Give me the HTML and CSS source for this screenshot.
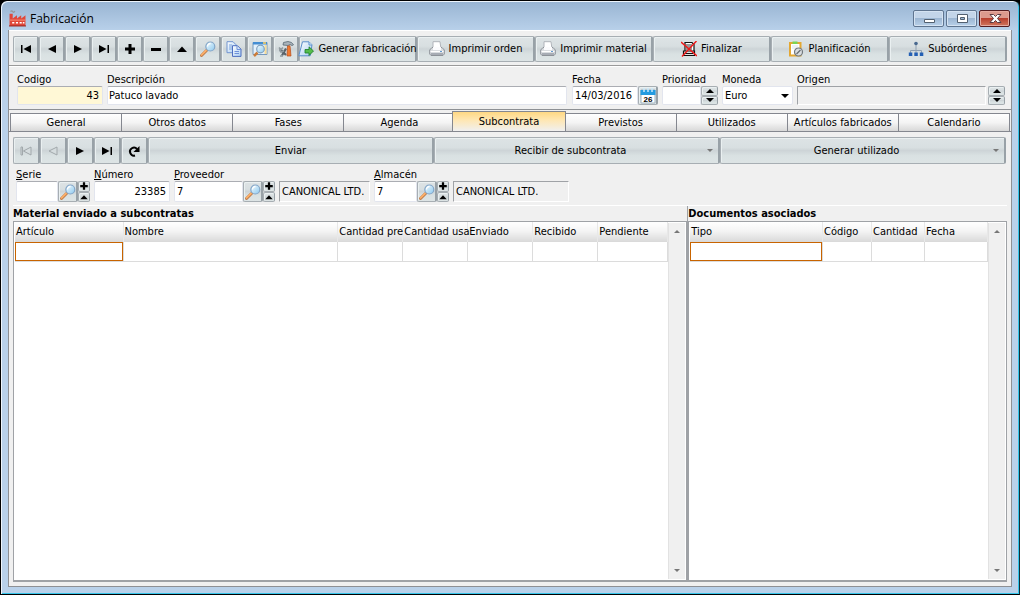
FILE: index.html
```html
<!DOCTYPE html>
<html lang="es">
<head>
<meta charset="utf-8">
<title>Fabricación</title>
<meta name="viewport" content="width=device-width, initial-scale=1">
<link rel="stylesheet" href="styles.css">
</head>
<body>
<svg class="sprite" aria-hidden="true">
  <defs>
    <linearGradient id="glass" x1="0" y1="0" x2="1" y2="1"><stop offset="0" stop-color="#f4fcff"/><stop offset="1" stop-color="#8cc8ee"/></linearGradient>
    <linearGradient id="sheet" x1="0" y1="0" x2="1" y2="1"><stop offset="0" stop-color="#ffffff"/><stop offset="1" stop-color="#a8cdf2"/></linearGradient>
  </defs>
  <symbol id="first" viewBox="0 0 16 16"><path d="M3 4h1.500v8H3zM13 4v8L5.500 8z"/></symbol>
  <symbol id="prev" viewBox="0 0 16 16"><path d="M12 4v8L4 8z"/></symbol>
  <symbol id="next" viewBox="0 0 16 16"><path d="M4 4v8l8-4z"/></symbol>
  <symbol id="last" viewBox="0 0 16 16"><path d="M3 4v8l7.500-4zM11.500 4H13v8h-1.500z"/></symbol>
  <symbol id="plus" viewBox="0 0 16 16"><path d="M6.500 3h3v3.500H13v3H9.500V13h-3V9.500H3v-3h3.500z"/></symbol>
  <symbol id="minus" viewBox="0 0 16 16"><path d="M3 7h10v3H3z"/></symbol>
  <symbol id="up" viewBox="0 0 16 16"><path d="M3 11h10L8 5.500z"/></symbol>
  <symbol id="reload" viewBox="0 0 16 16"><path d="M9 12.500A4 4 0 1 1 11 6" fill="none" stroke="#000" stroke-width="2"/><path d="M13.500 3v6H7.500z"/></symbol>
  <symbol id="lens" viewBox="0 0 16 16"><path d="M1.500 14.500l5-5" stroke="#c08050" stroke-width="3" stroke-linecap="round"/><path d="M1.500 14l4.600-4.600" stroke="#ffb068" stroke-width="1.600" stroke-linecap="round"/><circle cx="10.300" cy="5.500" r="4.500" fill="url(#glass)" stroke="#84a6c8" stroke-width="1.200"/><path d="M7.500 5.500a3 3 0 0 1 3-3" fill="none" stroke="#fff" stroke-width="1.300"/></symbol>
  <symbol id="copy" viewBox="0 0 16 16"><path d="M1 .7h6l3 3v8H1z" fill="url(#sheet)" stroke="#7194d0"/><path d="M3 4h3M3 6h3M3 8h3" stroke="#7ba2dd"/><path d="M6.500 4.700h5l3.500 3.500v7.200H6.500z" fill="url(#sheet)" stroke="#4e6fc0"/><path d="M11 5v3.500h4M8.500 10.500h4.500M8.500 12.500h4.500" fill="none" stroke="#6f91da"/></symbol>
  <symbol id="browse" viewBox="0 0 16 16"><path d="M1 1.500h14v12H1z" fill="#e3f1fc" stroke="#7799bb"/><path d="M1 1h14v2.500H1z" fill="#438dd3"/><path d="M11 2h3" stroke="#ffd05a" stroke-width="1.500"/><path d="M12.500 4h2v9h-2z" fill="#f9dc95"/><path d="M2 15l3.500-3.500" stroke="#cc7c39" stroke-width="2.500"/><circle cx="8.500" cy="8" r="3.800" fill="url(#glass)" stroke="#7f9fbd" stroke-width="1.200"/></symbol>
  <symbol id="tools" viewBox="0 0 16 16"><path d="M4 14.500l4-7M2 8l6 6" stroke="#59636a" stroke-width="2.200"/><path d="M1 6.500l2 2 2-2M1.500 9l1.500 2 3-1M2 15h3" fill="none" stroke="#8f999e" stroke-width="1.600"/><path d="M5.500 1.500l4.500-1 3.500 1 2 2.300-1.500.7-2-1-2 1-5-.5z" fill="#a9b3ba" stroke="#586872" stroke-width=".8"/><path d="M9.500 5l2.500-.2 1 10.200h-4z" fill="#f07a30" stroke="#b54a1a" stroke-width=".7"/></symbol>
  <symbol id="export" viewBox="0 0 16 16"><path d="M4.500.8H11l3 3-1.800 11H.8z" fill="url(#sheet)" stroke="#5b8eca"/><path d="M11 1v3h3" fill="#dcefff" stroke="#5b8eca"/><path d="M7 8.500h4V5.800l4.500 4.200-4.500 4.500V12H7z" fill="#55bd4b" stroke="#187c27" stroke-width=".8"/></symbol>
  <symbol id="printer" viewBox="0 0 16 16"><path d="M4 .7h7l1 7.300H4z" fill="#fff" stroke="#b0b4ba"/><path d="M.7 9l2.300-2.500h10L15.300 9v4L14 14.500H2L.7 13z" fill="#dadde0" stroke="#8d9298"/><path d="M4 6h8v3H4z" fill="#fbfbfd"/><path d="M1.500 10.500h13" stroke="#fff"/><path d="M2 12h12v2H2z" fill="#a7acb4"/><path d="M11 10.500h2" stroke="#6499cc"/></symbol>
  <symbol id="finish" viewBox="0 0 16 16"><path d="M4 1.500h7l2 2V11H4z" fill="#fff" stroke="#111" stroke-width="1.200"/><path d="M5 4h6M5 6h6M5 8h6" stroke="#333"/><path d="M2.500 10h11v4.500h-11z" fill="#e1e1e1" stroke="#111" stroke-width="1.200"/><path d="M4 12.500h8" stroke="#111"/><path d="M0 1l16 14M15.500 0L1 15.500" stroke="#f11616" stroke-width="1.400"/></symbol>
  <symbol id="plan" viewBox="0 0 16 16"><path d="M2 2h10.500v12.500H2z" fill="#fff" stroke="#e4a832" stroke-width="2"/><path d="M4.500.5h5V3h-5z" fill="#7bd554"/><path d="M4 5h6M4 7h5" stroke="#dce6ee"/><circle cx="10.500" cy="11" r="4" fill="#d9dde0" stroke="#70777c" stroke-width="1.200"/><path d="M8.500 13l4-4" stroke="#656c71" stroke-width="1.200"/></symbol>
  <symbol id="tree" viewBox="0 0 16 16"><path d="M8 3v9M2.500 12V9.500h11V12" fill="none" stroke="#8fa0b2"/><circle cx="8" cy="2.500" r="1.800" fill="#49688f"/><path d="M.8 11.500h3.500V15H.8zM6.300 11.500h3.500V15H6.300zM11.800 11.500h3.500V15h-3.500z" fill="#2460b4"/></symbol>
</svg>

<div class="window">
  <header class="titlebar">
    <svg class="app-icon" viewBox="0 0 16 16" aria-hidden="true"><path d="M1.500 1.500q1-1.500 2 0t2-.5" fill="none" stroke="#999" stroke-width="1.200"/><path d="M.5 15V3.500h3V8l4-3v3l4-3v3l4-3v10z" fill="#e0483a"/><path d="M1 9.500h14.500" stroke="#f88a76"/><path d="M3 12h2M6.500 12h2M10 12h2M13 12h1.500" stroke="#fff" stroke-width="1.500"/><path d="M0 15h16" stroke="#9c2722"/></svg>
    <h1 class="title">Fabricación</h1>
    <div class="controls">
      <button class="control" aria-label="Minimizar"><svg viewBox="0 0 16 12"><path d="M3.500 6.500h10v3h-10z" fill="#fff" stroke="#526070"/></svg></button>
      <button class="control" aria-label="Maximizar"><svg viewBox="0 0 16 12"><path d="M3.500 1.500h10v8h-10zM6.500 4.500v2h4v-2z" fill="#fff" fill-rule="evenodd" stroke="#526070"/></svg></button>
      <button class="control close" aria-label="Cerrar"><svg viewBox="0 0 16 12"><path d="M3 1.500h3.500l2 2 2-2H14L10.500 5.500 14 9.500h-3.500l-2-2-2 2H3l3.500-4z" fill="#fff" stroke="#593c44"/></svg></button>
    </div>
  </header>

  <main class="client">
    <nav class="toolbar" aria-label="Registro">
      <button class="btn" aria-label="Primero"><svg class="glyph"><use href="#first"/></svg></button>
      <button class="btn" aria-label="Anterior"><svg class="glyph"><use href="#prev"/></svg></button>
      <button class="btn" aria-label="Siguiente"><svg class="glyph"><use href="#next"/></svg></button>
      <button class="btn" aria-label="Último"><svg class="glyph"><use href="#last"/></svg></button>
      <button class="btn" aria-label="Añadir"><svg class="glyph"><use href="#plus"/></svg></button>
      <button class="btn" aria-label="Eliminar"><svg class="glyph"><use href="#minus"/></svg></button>
      <button class="btn" aria-label="Editar"><svg class="glyph"><use href="#up"/></svg></button>
      <button class="btn" aria-label="Buscar"><svg class="icon"><use href="#lens"/></svg></button>
      <button class="btn" aria-label="Copiar"><svg class="icon"><use href="#copy"/></svg></button>
      <button class="btn" aria-label="Vista"><svg class="icon"><use href="#browse"/></svg></button>
      <button class="btn" aria-label="Herramientas"><svg class="icon"><use href="#tools"/></svg></button>
      <button class="btn"><svg class="icon"><use href="#export"/></svg>Generar fabricación</button>
      <button class="btn"><svg class="icon"><use href="#printer"/></svg>Imprimir orden</button>
      <button class="btn"><svg class="icon"><use href="#printer"/></svg>Imprimir material</button>
      <button class="btn"><svg class="icon"><use href="#finish"/></svg>Finalizar</button>
      <button class="btn"><svg class="icon"><use href="#plan"/></svg>Planificación</button>
      <button class="btn"><svg class="icon"><use href="#tree"/></svg>Subórdenes</button>
    </nav>

    <section class="record">
      <div class="field code"><label for="codigo">Codigo</label><input class="box number key-value" id="codigo" value="43"></div>
      <div class="field grow"><label for="descripcion">Descripción</label><input class="box" id="descripcion" value="Patuco lavado"></div>
      <div class="field date"><label for="fecha">Fecha</label>
        <div class="combo"><input class="box" id="fecha" value="14/03/2016"><button class="btn pick" aria-label="Calendario"><svg class="icon" viewBox="0 0 16 16"><path d="M1 2h14v13H1z" fill="#fff" stroke="#9fb2c0"/><path d="M.5 2h15v5H.500z" fill="#249be0"/><path d="M4 0v4M8 0v4M12 0v4" stroke="#c7e9fb" stroke-width="1.500"/><text class="day" x="8" y="14" text-anchor="middle">26</text></svg></button></div>
      </div>
      <div class="field priority"><label for="prioridad">Prioridad</label>
        <div class="combo"><input class="box" id="prioridad"><span class="spin"><button class="btn" aria-label="Subir prioridad"><i class="tri tri-up"></i></button><button class="btn" aria-label="Bajar prioridad"><i class="tri"></i></button></span></div>
      </div>
      <div class="field currency"><label for="moneda">Moneda</label>
        <div class="select"><select class="box" id="moneda"><option>Euro</option></select><i class="tri"></i></div>
      </div>
      <div class="field origin"><label for="origen">Origen</label>
        <div class="combo spaced"><input class="box readonly" id="origen" readonly><span class="spin"><button class="btn" aria-label="Origen anterior"><i class="tri tri-up"></i></button><button class="btn" aria-label="Origen siguiente"><i class="tri"></i></button></span></div>
      </div>
    </section>

    <div class="tabs" role="tablist">
      <button class="tab" role="tab">General</button>
      <button class="tab" role="tab">Otros datos</button>
      <button class="tab" role="tab">Fases</button>
      <button class="tab" role="tab">Agenda</button>
      <button class="tab active" role="tab" aria-selected="true">Subcontrata</button>
      <button class="tab" role="tab">Previstos</button>
      <button class="tab" role="tab">Utilizados</button>
      <button class="tab" role="tab">Artículos fabricados</button>
      <button class="tab" role="tab">Calendario</button>
    </div>

    <section class="page" role="tabpanel">
      <div class="actions">
        <button class="btn" disabled aria-label="Primero"><svg class="glyph"><use href="#first"/></svg></button>
        <button class="btn" disabled aria-label="Anterior"><svg class="glyph"><use href="#prev"/></svg></button>
        <button class="btn" aria-label="Siguiente"><svg class="glyph"><use href="#next"/></svg></button>
        <button class="btn" aria-label="Último"><svg class="glyph"><use href="#last"/></svg></button>
        <button class="btn" aria-label="Actualizar"><svg class="glyph"><use href="#reload"/></svg></button>
        <button class="btn">Enviar</button>
        <button class="btn menu"><span>Recibir de subcontrata</span><i class="tri small"></i></button>
        <button class="btn menu"><span>Generar utilizado</span><i class="tri small"></i></button>
      </div>

      <div class="filters">
        <div class="field serie"><label for="serie"><u>S</u>erie</label>
          <div class="combo"><input class="box" id="serie"><button class="btn pick" aria-label="Buscar serie"><svg class="icon"><use href="#lens"/></svg></button><span class="spin narrow"><button class="btn" aria-label="Nueva serie"><svg class="mini"><use href="#plus"/></svg></button><button class="btn" aria-label="Editar serie"><svg class="mini"><use href="#up"/></svg></button></span></div>
        </div>
        <div class="field numero"><label for="numero"><u>N</u>úmero</label><input class="box number" id="numero" value="23385"></div>
        <div class="field proveedor"><label for="proveedor"><u>P</u>roveedor</label>
          <div class="combo"><input class="box" id="proveedor" value="7"><button class="btn pick" aria-label="Buscar proveedor"><svg class="icon"><use href="#lens"/></svg></button><span class="spin narrow"><button class="btn" aria-label="Nuevo proveedor"><svg class="mini"><use href="#plus"/></svg></button><button class="btn" aria-label="Editar proveedor"><svg class="mini"><use href="#up"/></svg></button></span></div>
        </div>
        <input class="box readonly supplier" aria-label="Nombre del proveedor" value="CANONICAL LTD." readonly>
        <div class="field almacen"><label for="almacen"><u>A</u>lmacén</label>
          <div class="combo"><input class="box" id="almacen" value="7"><button class="btn pick" aria-label="Buscar almacén"><svg class="icon"><use href="#lens"/></svg></button><span class="spin narrow"><button class="btn" aria-label="Nuevo almacén"><svg class="mini"><use href="#plus"/></svg></button><button class="btn" aria-label="Editar almacén"><svg class="mini"><use href="#up"/></svg></button></span></div>
        </div>
        <input class="box readonly store" aria-label="Nombre del almacén" value="CANONICAL LTD." readonly>
      </div>

      <div class="panels">
        <section class="panel">
          <h2>Material enviado a subcontratas</h2>
          <div class="list">
            <div class="sheet">
              <table>
                <colgroup><col class="w-article"><col><col class="w-qty"><col class="w-qty"><col class="w-qty"><col class="w-qty"><col class="w-pending"></colgroup>
                <thead><tr><th>Artículo</th><th>Nombre</th><th>Cantidad pre</th><th>Cantidad usa</th><th>Enviado</th><th>Recibido</th><th>Pendiente</th></tr></thead>
                <tbody><tr><td class="current"></td><td></td><td></td><td></td><td></td><td></td><td></td></tr></tbody>
              </table>
            </div>
            <div class="scroll"><i class="tri tri-up small"></i><i class="tri small"></i></div>
          </div>
        </section>
        <section class="panel">
          <h2>Documentos asociados</h2>
          <div class="list">
            <div class="sheet">
              <table>
                <colgroup><col><col class="w-code"><col class="w-amount"><col class="w-date"></colgroup>
                <thead><tr><th>Tipo</th><th>Código</th><th>Cantidad</th><th>Fecha</th></tr></thead>
                <tbody><tr><td class="current"></td><td></td><td></td><td></td></tr></tbody>
              </table>
            </div>
            <div class="scroll"><i class="tri tri-up small"></i><i class="tri small"></i></div>
          </div>
        </section>
      </div>
    </section>
  </main>
</div>
</body>
</html>
```

FILE: styles.css
```css
* { box-sizing: border-box; }

body {
  margin: 0;
  background: #000;
  color: #000;
  font: 11px/14px Tahoma, "DejaVu Sans Condensed", "Noto Sans", sans-serif;
}

button, input, select {
  margin: 0;
  font: inherit;
  color: inherit;
}

.sprite { position: absolute; width: 0; height: 0; }

.window {
  display: flex;
  flex-direction: column;
  min-height: 100vh;
  padding: 0 7px 7px;
  border: 1px solid #000;
  border-right-color: #12303a;
  border-radius: 7px 7px 0 0;
  background: linear-gradient(#98b4d2, #b9d1ea 30px, #b9d1ea);
  box-shadow: inset 1px 1px #eef5fc, inset -1px -1px #35c5ea;
}

/* Title bar */
.titlebar {
  display: flex;
  align-items: center;
  gap: 4px;
  height: 29px;
  padding: 6px 2px 0 1px;
}
.app-icon { width: 17px; height: 17px; }
.title {
  flex: 1;
  margin: 0;
  font: 12px/16px "Segoe UI", "Open Sans", sans-serif;
}
.controls { display: flex; gap: 2px; }
.control {
  display: grid;
  place-items: center;
  width: 31px;
  height: 17px;
  padding: 0;
  border: 1px solid #5f7590;
  border-radius: 2px;
  background: linear-gradient(#c3d5e9 45%, #9db7d3 50%, #b8d0e9);
  box-shadow: inset 0 0 0 1px #d5e3f2;
}
.control svg { width: 16px; height: 12px; }
.close {
  border-color: #541c20;
  background: linear-gradient(#dc9a8e 45%, #b8402f 50%, #d0765e);
  box-shadow: inset 0 0 0 1px #e5aaa0;
}

.client {
  display: flex;
  flex-direction: column;
  flex: 1;
  border: solid #8e9094;
  border-width: 0 1px 1px;
  background: #f0f0f0;
}

/* Buttons */
.btn {
  display: flex;
  align-items: center;
  justify-content: center;
  gap: 4px;
  min-width: 0;
  min-height: 0;
  padding: 0;
  border: 1px solid #a7aeb3;
  border-right: 2px solid #98a1a7;
  border-radius: 2px;
  background: linear-gradient(#dde3e5, #d8dfe1 38%, #cdd4d7 50%, #d9e1e2 70%, #dde4e5);
  box-shadow: inset 1px 1px #eaf0f1;
  white-space: nowrap;
}
.icon { flex: none; width: 16px; height: 16px; overflow: visible; }
.glyph { width: 16px; height: 16px; }
.mini { flex: none; width: 12px; height: 12px; margin: -3px 0; }
.btn:disabled .glyph { fill: #d5dcde; stroke: #a1a8ab; }

.tri {
  width: 0;
  height: 0;
  border: solid transparent;
  border-width: 4px 4px 0;
  border-top-color: #000;
}
.tri.small { border-width: 3px 3px 0; border-top-color: #777; }
.tri-up { transform: rotate(180deg); }

.toolbar {
  display: grid;
  grid-template-columns: repeat(11, 26px) repeat(6, 1fr);
  padding: 5px 4px 3px;
  border-top: 1px solid #fff;
  border-bottom: 1px solid #9a9a9a;
}
.toolbar .btn { height: 26px; }

/* Fields */
.record, .filters { display: flex; align-items: flex-end; }
.record {
  gap: 4px;
  padding: 6px 6px 4px 8px;
  border-top: 1px solid #fff;
  border-bottom: 1px solid #8d9094;
}
.filters { gap: 4px; padding: 4px 7px 3px 3px; }
.field { display: flex; flex-direction: column; min-width: 0; line-height: 13px; }
.box {
  width: 100%;
  min-width: 0;
  height: 19px;
  padding: 0 2px;
  border: 1px solid #e2e5ee;
  border-top-color: #abadb3;
  border-radius: 2px;
  background: #fff;
}
#descripcion { padding: 0 1px; }
.filters .box { height: 21px; }
.number { padding-right: 3px; text-align: right; }
.key-value { background: #fff8d6; }
.readonly {
  border-color: #9fa2a6 #fff #fff #9fa2a6;
  border-radius: 0;
  background: #f0f0f0;
}
.combo { display: flex; align-items: stretch; }
.spaced { gap: 2px; }
.pick { flex: none; width: 20px; }
.spin { display: flex; flex: none; flex-direction: column; width: 17px; }
.spin .btn { flex: 1; border-right-width: 1px; }
.narrow { width: 12px; }
.day { font: bold 8px "Liberation Sans", sans-serif; }

.code { width: 86px; }
.grow { flex: 1; }
.date { width: 86px; margin-left: 1px; }
.priority { width: 56px; }
.currency { width: 71px; }
.origin { width: 208px; }
.select { display: grid; align-items: center; }
.select > * { grid-area: 1 / 1; }
.select select { appearance: none; border-color: #e2e5ee; }
.select .tri { justify-self: end; margin-right: 4px; pointer-events: none; }

.serie { width: 74px; }
.numero { width: 76px; }
.proveedor { width: 101px; }
.supplier { width: 91px; }
.almacen { width: 75px; }
.store { width: 116px; }

/* Tabs */
.tabs {
  display: flex;
  align-items: flex-end;
  padding: 1px 1px 0;
}
.tab {
  flex: 1 1 0;
  min-width: 0;
  height: 18px;
  margin-right: -1px;
  padding: 0;
  border: 1px solid #84878f;
  border-bottom: 0;
  background: linear-gradient(#fff, #f4f4f4 50%, #d8d8d8);
  white-space: nowrap;
}
.tab:last-child { margin-right: 0; }
.tab.active {
  flex-basis: 3px;
  height: 20px;
  margin-left: -2px;
  background: linear-gradient(#ffd883, #ffe6b0 40%, #f0f0f0);
}

.page {
  display: flex;
  flex: 1;
  flex-direction: column;
  padding: 5px 4px 4px;
  border-top: 1px solid #84878f;
}
.actions {
  display: grid;
  grid-template-columns: repeat(5, 27px) repeat(3, 1fr);
  padding-right: 1px;
}
.actions .btn { height: 27px; }
.actions .menu {
  display: grid;
  grid-template-columns: 1fr;
  align-items: center;
}
.menu > * { grid-area: 1 / 1; }
.menu span { padding-right: 12px; }
.menu .tri { justify-self: end; margin-right: 5px; }

/* Lists */
.panels {
  display: grid;
  flex: 1;
  grid-template-columns: minmax(0, 675fr) minmax(0, 320fr);
  border-top: 1px solid #fff;
}
.panel { display: flex; flex-direction: column; }
.panel + .panel { border-left: 1px solid #9fa2a6; }
.panel h2 { margin: 0; font-size: 11px; line-height: 15px; }
.list {
  display: flex;
  flex: 1;
  border: 1px solid #9fa2a6;
  border-bottom-width: 2px;
  background: #fff;
}
.sheet { flex: 1; min-width: 0; padding-left: 1px; }
table { width: 100%; border-collapse: collapse; table-layout: fixed; }
th, td { height: 19px; padding: 0 0 0 1px; border-right: 1px solid #dcdcdc; }
th {
  height: 20px;
  border-right-color: #e8e8e8;
  background: linear-gradient(#fff, #f4f4f4 45%, #d9d9d9);
  font-weight: normal;
  text-align: left;
  white-space: nowrap;
}
td { border-bottom: 1px solid #dcdcdc; }
td.current { outline: 1px solid #c86400; outline-offset: -1px; }
.w-article { width: 108px; }
.w-qty { width: 65px; }
.w-pending { width: 70px; }
.w-code { width: 49px; }
.w-amount { width: 53px; }
.w-date { width: 63px; }
.scroll {
  display: flex;
  flex: none;
  flex-direction: column;
  align-items: center;
  justify-content: space-between;
  width: 17px;
  margin: 1px 1px 1px 0;
  padding: 7px 0;
  border-left: 1px solid #e2e2e2;
  background: #f0f0f0;
}
```
